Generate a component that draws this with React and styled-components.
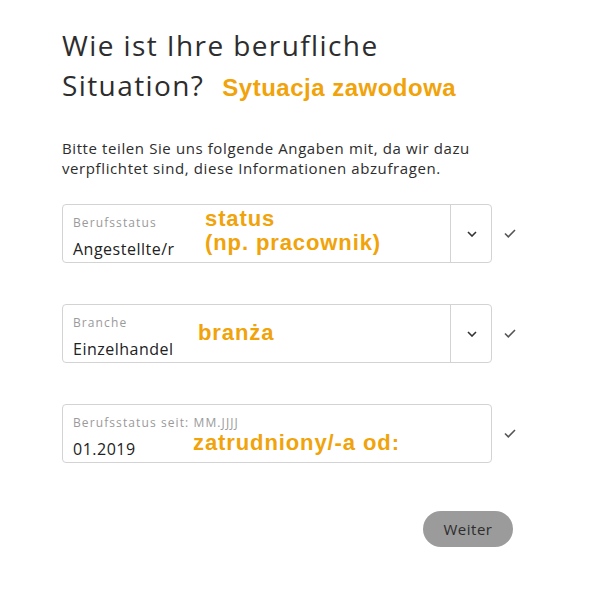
import React from "react";
import styled, { createGlobalStyle } from "styled-components";

const GlobalStyle = createGlobalStyle`
  body {
    margin: 0;
    background: #fff;
    font-family: "Open Sans", "Lato", sans-serif;
    color: #2d2d2d;
  }
`;

const Page = styled.div`
  width: 593px;
  height: 596px;
  padding: 25px 0 0 62px;
  box-sizing: border-box;
`;

const Title = styled.h1`
  margin: 0;
  width: 480px;
  font-size: 28px;
  line-height: 40px;
  letter-spacing: 1.4px;
  font-weight: 400;
  color: #2d2d2d;
`;

const Note = styled.span`
  position: absolute;
  font-family: "Liberation Sans", Arial, sans-serif;
  font-weight: bold;
  color: #f0a30a;
  font-size: 22px;
  letter-spacing: 0.9px;
  line-height: ${(p) => p.$lh || 24}px;
  left: ${(p) => p.$x}px;
  top: ${(p) => p.$y}px;
  white-space: nowrap;
`;

const TitleNote = styled.span`
  font-family: "Liberation Sans", Arial, sans-serif;
  font-weight: bold;
  color: #f0a30a;
  font-size: 24px;
  letter-spacing: 0.5px;
  margin-left: 18px;
`;

const Intro = styled.p`
  margin: 30px 0 0;
  width: 480px;
  font-size: 15px;
  line-height: 20px;
  letter-spacing: 0.6px;
  color: #2d2d2d;
`;

const Fields = styled.div`
  margin-top: 26px;
  display: flex;
  flex-direction: column;
  gap: 41px;
`;

const Row = styled.div`
  display: flex;
  align-items: center;
  gap: 12px;
`;

const Box = styled.div`
  position: relative;
  width: 430px;
  height: 59px;
  box-sizing: border-box;
  border: 1px solid #d3d3d3;
  border-radius: 4px;
  display: flex;
`;

const Content = styled.div`
  flex: 1;
  padding: 9px 0 0 10px;
  display: flex;
  flex-direction: column;
`;

const Label = styled.span`
  font-size: 12px;
  line-height: 18px;
  letter-spacing: 1.1px;
  color: #9a9a9a;
`;

const Value = styled.span`
  margin-top: 7px;
  font-size: 16px;
  line-height: 20px;
  letter-spacing: 0.5px;
  color: #222;
`;

const Toggle = styled.div`
  width: 38px;
  border-left: 1px solid #d3d3d3;
  display: flex;
  align-items: center;
  justify-content: center;
  padding-left: 2px;
`;

const Actions = styled.div`
  width: 451px;
  margin-top: 48px;
  display: flex;
  justify-content: flex-end;
`;

const Button = styled.button`
  width: 90px;
  height: 36px;
  border: none;
  border-radius: 18px;
  background: #9b9b9b;
  color: #2d2d2d;
  font-family: "Open Sans", "Lato", sans-serif;
  font-size: 15px;
  letter-spacing: 0.5px;
`;

const Chevron = () => (
  <svg width="10" height="6" viewBox="0 0 10 6">
    <path d="M1 1l4 4 4-4" fill="none" stroke="#333" strokeWidth="1.6" />
  </svg>
);

const Check = () => (
  <svg width="12" height="9" viewBox="0 0 12 9">
    <path d="M1 4.5l3.3 3.3L11 1" fill="none" stroke="#555" strokeWidth="1.6" />
  </svg>
);

const Field = ({ label, value, select, children }) => (
  <Row>
    <Box>
      <Content>
        <Label>{label}</Label>
        <Value>{value}</Value>
      </Content>
      {select && (
        <Toggle>
          <Chevron />
        </Toggle>
      )}
      {children}
    </Box>
    <Check />
  </Row>
);

export default function App() {
  return (
    <Page>
      <GlobalStyle />
      <Title>
        Wie ist Ihre berufliche
        <br />
        Situation?
        <TitleNote>Sytuacja zawodowa</TitleNote>
      </Title>
      <Intro>
        Bitte teilen Sie uns folgende Angaben mit, da wir dazu
        <br />
        verpflichtet sind, diese Informationen abzufragen.
      </Intro>
      <Fields>
        <Field label="Berufsstatus" value="Angestellte/r" select>
          <Note $x={142} $y={2} $lh={24}>
            status
            <br />
            (np. pracownik)
          </Note>
        </Field>
        <Field label="Branche" value="Einzelhandel" select>
          <Note $x={135} $y={16}>branża</Note>
        </Field>
        <Field label="Berufsstatus seit: MM.JJJJ" value="01.2019">
          <Note $x={130} $y={26}>zatrudniony/-a od:</Note>
        </Field>
      </Fields>
      <Actions>
        <Button>Weiter</Button>
      </Actions>
    </Page>
  );
}
